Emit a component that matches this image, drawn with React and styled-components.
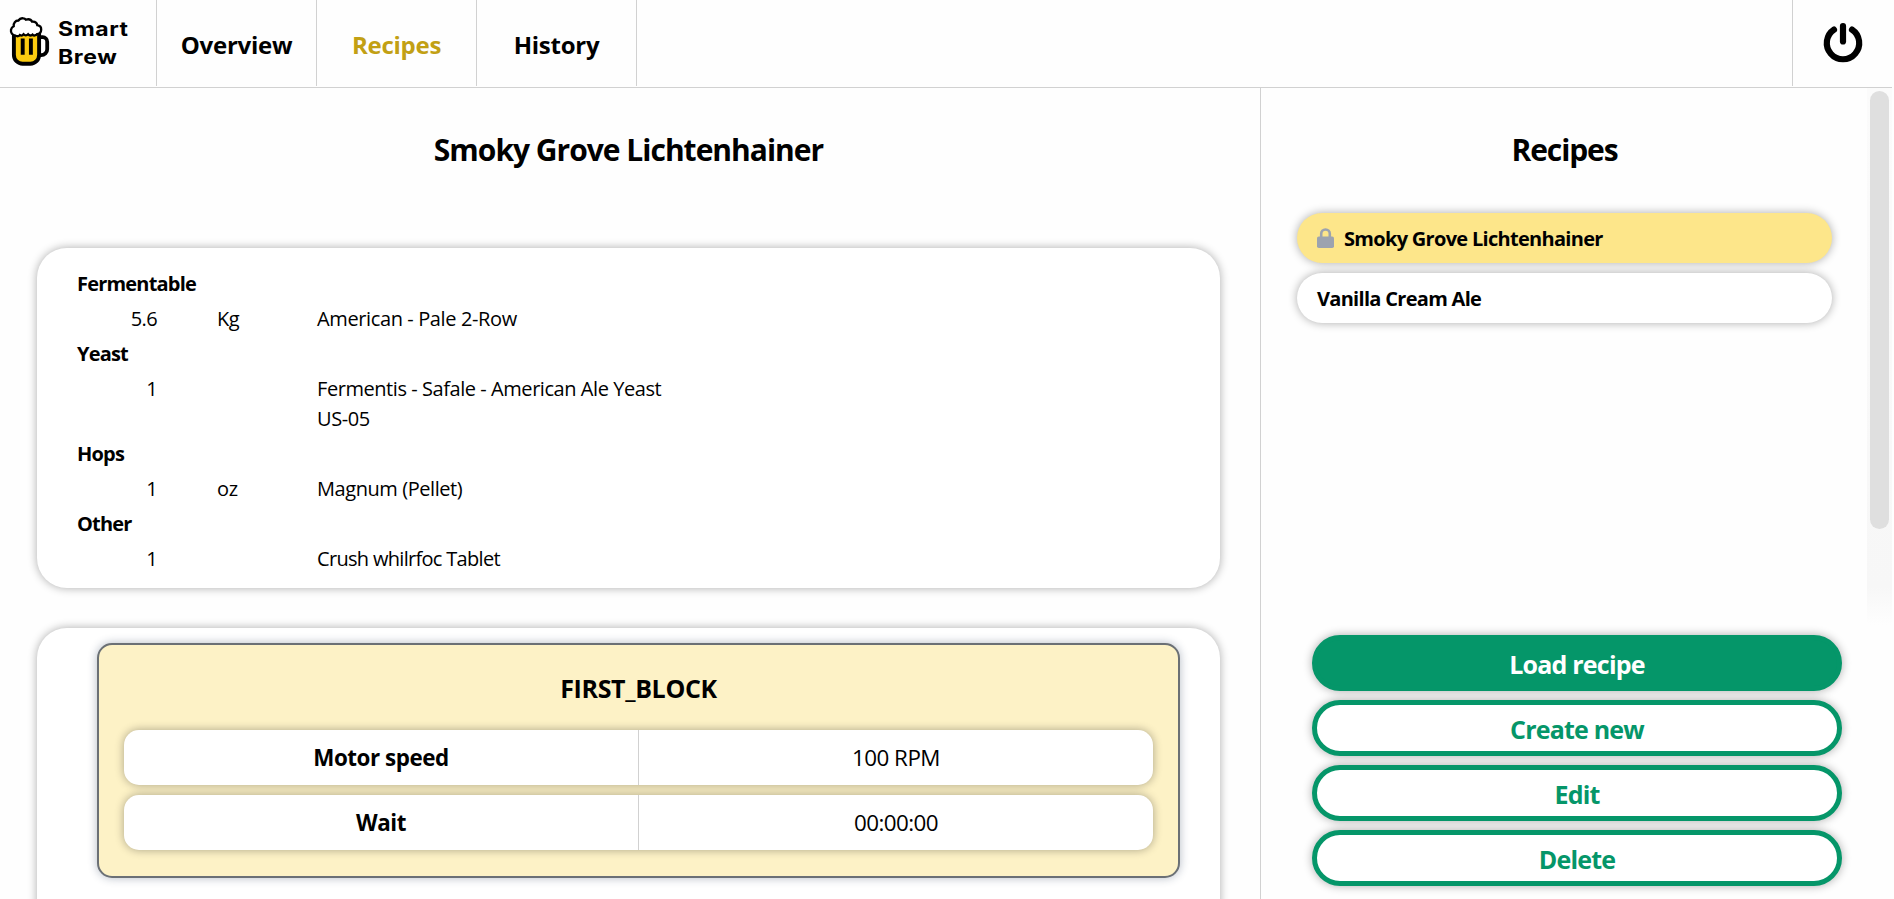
import React from 'react';
import styled, { createGlobalStyle } from 'styled-components';

const LINE = '#d1d1d1';
const SHADOW = '0 0 10px rgba(0, 0, 0, 0.33)';
const GREEN = '#059669';

const GlobalStyle = createGlobalStyle`
  * { box-sizing: border-box; }
  body {
    margin: 0;
    background: #fefefe;
    color: #000;
    font-family: 'Open Sans', 'Noto Sans', sans-serif;
    overflow: hidden;
  }
  h1, h2, h3 { margin: 0; font-weight: 700; }
`;

const Page = styled.div`
  width: 1892px;
  height: 899px;
  display: flex;
  flex-direction: column;
  overflow: hidden;
`;

const Header = styled.header`
  flex: none;
  height: 88px;
  display: flex;
  padding-bottom: 1px;
  border-bottom: 1px solid ${LINE};
`;

const Brand = styled.div`
  width: 157px;
  display: flex;
  align-items: flex-start;
  padding: 16px 0 0 9px;
  border-right: 1px solid ${LINE};
`;

const BrandName = styled.div`
  margin-left: 7px;
  font-family: 'Inter', sans-serif;
  font-size: 20px;
  font-weight: 700;
  line-height: 27.5px;
  letter-spacing: 0.5px;
  transform: scaleX(1.15);
  transform-origin: left;
`;

const NavItem = styled.a`
  width: 160px;
  padding-top: 3px;
  display: flex;
  align-items: center;
  justify-content: center;
  border-right: 1px solid ${LINE};
  font-size: 24px;
  font-weight: 700;
  letter-spacing: -0.25px;
  color: ${(p) => (p.$active ? '#c2a014' : '#000')};
`;

const PowerCell = styled.div`
  width: 100px;
  margin-left: auto;
  display: flex;
  justify-content: center;
  align-items: flex-start;
  padding: 22px 0 0 1px;
  border-left: 1px solid ${LINE};
`;

const Main = styled.div`
  flex: 1;
  min-height: 0;
  display: flex;
`;

const Details = styled.main`
  width: 1261px;
  padding: 0 40px 0 37px;
  border-right: 1px solid ${LINE};
  overflow: hidden;
`;

const Title = styled.h1`
  padding-top: 41px;
  height: 160px;
  font-size: 30px;
  line-height: 42px;
  letter-spacing: -1px;
  text-align: center;
`;

const Card = styled.section`
  background: #fff;
  border-radius: 30px;
  box-shadow: ${SHADOW};
`;

const Ingredients = styled(Card)`
  display: flex;
  flex-direction: column;
  gap: 5px;
  padding: 21px 40px 14px;
  font-size: 20px;
  line-height: 30px;
`;

const Group = styled.h3`
  font-size: 20px;
  line-height: 30px;
  letter-spacing: -0.8px;
`;

const Ingredient = styled.div`
  display: grid;
  grid-template-columns: 80px 40px 360px;
  column-gap: 60px;
`;

const Amount = styled.span`
  text-align: right;
  letter-spacing: -0.6px;
`;

const Unit = styled.span`
  letter-spacing: -0.4px;
`;

const Name = styled.span`
  letter-spacing: ${(p) => p.$tracking}px;
`;

const Program = styled(Card)`
  margin-top: 40px;
  height: 400px;
  padding: 15px 40px 0 60px;
`;

const Block = styled.div`
  height: 235px;
  padding: 25px 25px 0;
  border: 2px solid #6b7075;
  border-radius: 15px;
  background: #fdf2c6;
  box-shadow: 0 0 10px rgba(30, 50, 80, 0.33);
`;

const BlockTitle = styled.h2`
  height: 60px;
  font-size: 25px;
  line-height: 36px;
  letter-spacing: -0.35px;
  text-align: center;
`;

const Step = styled.div`
  display: flex;
  height: 55px;
  margin-bottom: 10px;
  border-radius: 15px;
  background: #fff;
  box-shadow: ${SHADOW};
  font-size: 22.4px;
`;

const StepCell = styled.div`
  flex: 1;
  display: flex;
  align-items: center;
  justify-content: center;
  font-weight: ${(p) => (p.$label ? 700 : 400)};
  border-right: ${(p) => (p.$label ? `1px solid ${LINE}` : 'none')};
  letter-spacing: ${(p) => (p.$label ? -0.45 : -0.55)}px;
`;

const Sidebar = styled.aside`
  flex: 1;
  display: flex;
  flex-direction: column;
`;

const ListPane = styled.div`
  height: 537px;
  display: flex;
`;

const List = styled.div`
  flex: 1;
  padding: 0 35px 0 36px;
`;

const ListTitle = styled.h2`
  height: 125px;
  padding-top: 41px;
  font-size: 30px;
  line-height: 42px;
  letter-spacing: -1.1px;
  text-align: center;
`;

const RecipeItem = styled.div`
  height: 50px;
  margin-bottom: 10px;
  padding: 0 20px;
  display: flex;
  align-items: center;
  gap: 10px;
  border-radius: 25px;
  background: ${(p) => (p.$selected ? '#fde68a' : '#fff')};
  box-shadow: ${SHADOW};
  font-size: 20px;
  font-weight: 700;
  letter-spacing: -0.7px;
`;

const ScrollTrack = styled.div`
  width: 25px;
  padding: 3px 3px 0 3px;
  background: linear-gradient(to bottom, #fbfbfb 0, #f7f7f7 93%, #fefefe 100%);
`;

const ScrollThumb = styled.div`
  height: 438px;
  border-radius: 10px;
  background: #dfdfdf;
`;

const Actions = styled.div`
  display: flex;
  flex-direction: column;
  gap: 9.5px;
  padding: 10px 50px 0 51px;
`;

const ActionButton = styled.button`
  height: 55.5px;
  padding: 2px 0 0;
  border: 5px solid ${GREEN};
  border-radius: 28px;
  background: ${(p) => (p.$primary ? GREEN : '#fff')};
  color: ${(p) => (p.$primary ? '#fff' : GREEN)};
  box-shadow: ${SHADOW};
  font: 700 25px 'Open Sans', 'Noto Sans', sans-serif;
  letter-spacing: -0.8px;
`;

const BeerMug = () => (
  <svg width="42" height="51" viewBox="9 16 42 51" fill="none">
    <path d="M39 37.200h3.700a4.500 4.500 0 0 1 4.500 4.500v7.500a6 6 0 0 1-6 6H39" stroke="#000" strokeWidth="3.800" />
    <path d="M13.900 33h25.200v22a8.700 8.700 0 0 1-8.700 8.700H22.600a8.700 8.700 0 0 1-8.700-8.700z" fill="#fccc10" stroke="#000" strokeWidth="3.900" />
    <path
      d="M15.500 35.600c-3.200-.4-5-3-4.500-5.800.4-2 1.600-3.100 2.700-3.600-.3-3.200 1.600-5.600 4.700-5.700 1.300-1.900 3.200-2.500 5-2.100 1.100.2 1.900.7 2.500 1.300 2.700-.9 5.200 0 6.300 2 2.600-.2 4.700 1 5.100 3.500 2.700.4 4 2.200 3.900 4.500-.1 2.600-1.700 4.200-4.200 4.400-1 1.600-3.200 1.900-4.500.5-1.500 1.200-3.300 1-4.400-.3-1.300 1.400-3.400 1.300-4.500 0-1 1.300-2.600 1.500-3.800.7-.8 1.300-2.600 1.700-4.300.6z"
      fill="#fff" stroke="#000" strokeWidth="2.300"
    />
    <path d="M22.700 38.500v16.300M30.900 38.500v16.300" stroke="#000" strokeWidth="3.900" />
  </svg>
);

const PowerIcon = () => (
  <svg width="42" height="42" viewBox="0 0 42 42" fill="none" stroke="#000" strokeWidth="6.200" strokeLinecap="round">
    <path d="M12 7.600a16.200 16.200 0 1 0 18 0" />
    <path d="M21 4v15.500" />
  </svg>
);

const LockIcon = () => (
  <svg width="17" height="20" viewBox="0 0 17 20">
    <path d="M4.200 9.500V5.800a4.300 4.300 0 0 1 8.600 0v3.700" fill="none" stroke="#9ca3af" strokeWidth="2.600" />
    <rect y="8.500" width="17" height="11.500" rx="1.800" fill="#9ca3af" />
  </svg>
);

const nav = ['Overview', 'Recipes', 'History'];

const ingredientGroups = [
  { group: 'Fermentable', amount: '5.6', unit: 'Kg', name: 'American - Pale 2-Row', tracking: -0.38 },
  { group: 'Yeast', amount: '1', unit: '', name: 'Fermentis - Safale - American Ale Yeast US-05', tracking: -0.44 },
  { group: 'Hops', amount: '1', unit: 'oz', name: 'Magnum (Pellet)', tracking: -0.43 },
  { group: 'Other', amount: '1', unit: '', name: 'Crush whilrfoc Tablet', tracking: -0.69 },
];

const steps = [
  ['Motor speed', '100 RPM'],
  ['Wait', '00:00:00'],
];

const recipes = [
  { name: 'Smoky Grove Lichtenhainer', locked: true },
  { name: 'Vanilla Cream Ale', locked: false },
];

export default function App() {
  return (
    <>
      <GlobalStyle />
      <Page>
        <Header>
          <Brand>
            <BeerMug />
            <BrandName>Smart<br />Brew</BrandName>
          </Brand>
          {nav.map((label) => (
            <NavItem key={label} $active={label === 'Recipes'}>{label}</NavItem>
          ))}
          <PowerCell><PowerIcon /></PowerCell>
        </Header>
        <Main>
          <Details>
            <Title>Smoky Grove Lichtenhainer</Title>
            <Ingredients>
              {ingredientGroups.map((g) => (
                <React.Fragment key={g.group}>
                  <Group>{g.group}</Group>
                  <Ingredient>
                    <Amount>{g.amount}</Amount>
                    <Unit>{g.unit}</Unit>
                    <Name $tracking={g.tracking}>{g.name}</Name>
                  </Ingredient>
                </React.Fragment>
              ))}
            </Ingredients>
            <Program>
              <Block>
                <BlockTitle>FIRST_BLOCK</BlockTitle>
                {steps.map(([label, value]) => (
                  <Step key={label}>
                    <StepCell $label>{label}</StepCell>
                    <StepCell>{value}</StepCell>
                  </Step>
                ))}
              </Block>
            </Program>
          </Details>
          <Sidebar>
            <ListPane>
              <List>
                <ListTitle>Recipes</ListTitle>
                {recipes.map((r) => (
                  <RecipeItem key={r.name} $selected={r.locked}>
                    {r.locked && <LockIcon />}
                    {r.name}
                  </RecipeItem>
                ))}
              </List>
              <ScrollTrack><ScrollThumb /></ScrollTrack>
            </ListPane>
            <Actions>
              <ActionButton $primary>Load recipe</ActionButton>
              <ActionButton>Create new</ActionButton>
              <ActionButton>Edit</ActionButton>
              <ActionButton>Delete</ActionButton>
            </Actions>
          </Sidebar>
        </Main>
      </Page>
    </>
  );
}
